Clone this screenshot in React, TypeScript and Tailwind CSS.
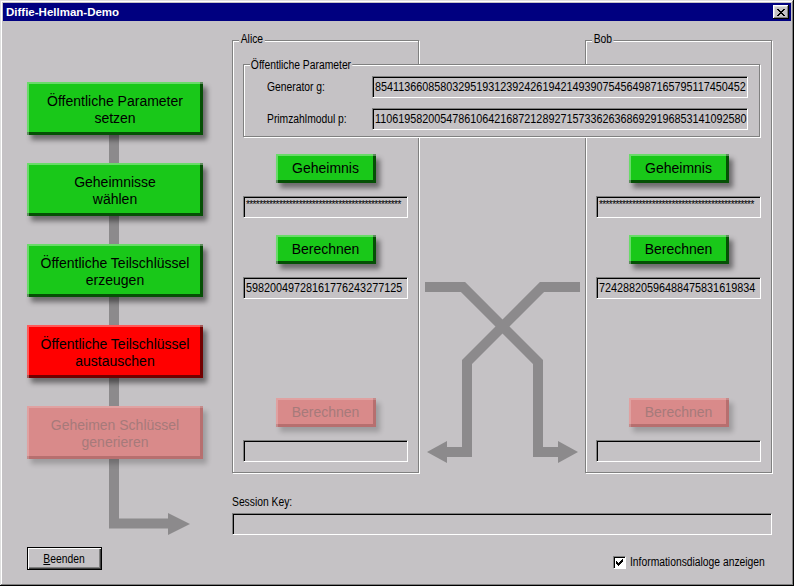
import React from "react";

type Variant = "green" | "red" | "off";

const variantClass: Record<Variant, string> = {
    green: "bg-[#19c819] text-black shadow-[inset_2px_2px_0_rgba(255,255,255,0.35),inset_-3px_-3px_0_rgba(0,50,0,0.8),4px_5px_5px_rgba(0,0,0,0.45)]",
    red: "bg-[#ff0000] text-black shadow-[inset_2px_2px_0_rgba(255,255,255,0.35),inset_-3px_-3px_0_rgba(80,0,0,0.8),4px_5px_5px_rgba(0,0,0,0.45)]",
    off: "bg-[#d98a8a] text-[#a67a7a] shadow-[inset_2px_2px_0_rgba(255,255,255,0.2),inset_-3px_-3px_0_rgba(120,60,60,0.35),4px_5px_5px_rgba(0,0,0,0.2)]",
};

// schmale Systemschrift nachahmen
function Txt({ children, className = "" }: { children: React.ReactNode; className?: string }) {
    return (
        <span className={`inline-block shrink-0 origin-left scale-x-[0.86] text-[12px] leading-[14px] whitespace-nowrap ${className}`}>
            {children}
        </span>
    );
}

function FlowButton({ lines, variant }: { lines: [string, string]; variant: Variant }) {
    return (
        <div className={`w-[176px] h-[53px] flex flex-col items-center justify-center pt-[2px] text-[14px] leading-[17px] ${variantClass[variant]}`}>
            <span>{lines[0]}</span>
            <span>{lines[1]}</span>
        </div>
    );
}

function SmallButton({ label, variant, className = "" }: { label: string; variant: Variant; className?: string }) {
    return (
        <div className={`w-[100px] h-[29px] shrink-0 flex items-center justify-center text-[14px] leading-[17px] ${variantClass[variant]} ${className}`}>
            {label}
        </div>
    );
}

function Field({ children, className = "" }: { children?: React.ReactNode; className?: string }) {
    return (
        <div className={`h-[22px] shrink-0 flex items-center px-[2px] bg-[#c5c2c5] border border-t-[#808080] border-l-[#808080] border-b-white border-r-white shadow-[inset_1px_1px_0_#000] overflow-hidden whitespace-nowrap ${className}`}>
            {children}
        </div>
    );
}

function Digits({ value }: { value: string }) {
    return <span className="inline-block shrink-0 origin-left scale-x-[0.9] text-[12px] leading-[14px]">{value}</span>;
}

const STARS = "***********************************************";

function PartyBox({ name, result }: { name: string; result: string }) {
    return (
        <div className="relative w-[187px] h-[433px] border border-[#808080] shadow-[inset_1px_1px_0_#fff,1px_1px_0_#fff] flex flex-col items-center pt-[113px]">
            <Txt className="absolute -top-[9px] left-[6px] px-[2px] bg-[#c5c2c5]">{name}</Txt>
            <SmallButton label="Geheimnis" variant="green" />
            <Field className="mt-[13px] w-[165px] !items-start pt-[2px]">
                <span className="text-[10px] leading-[12px] tracking-[-0.6px]">{STARS}</span>
            </Field>
            <SmallButton label="Berechnen" variant="green" className="mt-[17px]" />
            <Field className="mt-[13px] w-[165px]"><Digits value={result} /></Field>
            <SmallButton label="Berechnen" variant="off" className="mt-[99px]" />
            <Field className="mt-[13px] w-[165px]" />
        </div>
    );
}

export default function App() {
    return (
        <div className="w-[794px] h-[586px] bg-[#c5c2c5] p-[3px] shadow-[inset_-1px_-1px_0_#000,inset_1px_1px_0_#dfdfdf,inset_-2px_-2px_0_#808080,inset_2px_2px_0_#fff] flex flex-col font-['Liberation_Sans',Arial,sans-serif] text-black">
            {/* Titelleiste */}
            <div className="h-[18px] bg-[#000080] flex items-center justify-between pl-[3px] pr-[2px]">
                <span className="text-white font-bold text-[11.5px] leading-[14px]">Diffie-Hellman-Demo</span>
                <div className="w-[16px] h-[14px] bg-[#c5c2c5] flex items-center justify-center shadow-[inset_-1px_-1px_0_#000,inset_1px_1px_0_#fff,inset_-2px_-2px_0_#808080,inset_2px_2px_0_#dfdfdf]">
                    <svg width="8" height="7" viewBox="0 0 8 7" shapeRendering="crispEdges">
                        <path d="M0 0h2v1h-2zM6 0h2v1h-2zM1 1h2v1h-2zM5 1h2v1h-2zM2 2h4v1h-4zM3 3h2v1h-2zM2 4h4v1h-4zM1 5h2v1h-2zM5 5h2v1h-2zM0 6h2v1h-2zM6 6h2v1h-2z" fill="#000" />
                    </svg>
                </div>
            </div>

            <div className="flex">
                {/* Ablauf links */}
                <div className="relative ml-[24px] w-[205px] h-[514px]">
                    <svg className="absolute inset-0" width="205" height="514" viewBox="27 21 205 514">
                        <polyline points="114,100 114,523.5 170,523.5" fill="none" stroke="#8c8a8c" strokeWidth="10" strokeLinejoin="miter" />
                        <polygon points="168,513 190,524 168,535" fill="#8c8a8c" />
                    </svg>
                    <div className="relative flex flex-col gap-[28px] pt-[61px]">
                        <FlowButton lines={["Öffentliche Parameter", "setzen"]} variant="green" />
                        <FlowButton lines={["Geheimnisse", "wählen"]} variant="green" />
                        <FlowButton lines={["Öffentliche Teilschlüssel", "erzeugen"]} variant="green" />
                        <FlowButton lines={["Öffentliche Teilschlüssel", "austauschen"]} variant="red" />
                        <FlowButton lines={["Geheimen Schlüssel", "generieren"]} variant="off" />
                    </div>
                </div>

                {/* Alice / Bob */}
                <div className="w-[540px] pt-[19px]">
                    <div className="relative flex">
                        <PartyBox name="Alice" result="59820049728161776243277125" />
                        <div className="w-[166px] h-[433px]">
                            <svg width="166" height="433" viewBox="419 40 166 433">
                                <polyline points="425,287 463,287 538,362 538,452 560,452" fill="none" stroke="#8c8a8c" strokeWidth="10" strokeLinejoin="miter" />
                                <polygon points="558,441 578,452 558,463" fill="#8c8a8c" />
                                <polyline points="580,287 542,287 467,362 467,452 445,452" fill="none" stroke="#8c8a8c" strokeWidth="10" strokeLinejoin="miter" />
                                <polygon points="447,441 427,452 447,463" fill="#8c8a8c" />
                            </svg>
                        </div>
                        <PartyBox name="Bob" result="72428820596488475831619834" />

                        {/* Öffentliche Parameter liegt über beiden Rahmen */}
                        <div className="absolute left-[11px] top-[24px] w-[517px] h-[73px] bg-[#c5c2c5] border border-[#808080] shadow-[inset_1px_1px_0_#fff,1px_1px_0_#fff] pl-[23px] pt-[11px] flex flex-col gap-[10px]">
                            <Txt className="absolute -top-[7px] left-[6px] px-[1px] bg-[#c5c2c5]">Öffentliche Parameter</Txt>
                            <div className="flex items-center">
                                <div className="w-[105px] flex items-center"><Txt>Generator g:</Txt></div>
                                <Field className="w-[376px]"><Digits value="85411366085803295193123924261942149390754564987165795117450452" /></Field>
                            </div>
                            <div className="flex items-center">
                                <div className="w-[105px] flex items-center"><Txt>Primzahlmodul p:</Txt></div>
                                <Field className="w-[376px]"><Digits value="11061958200547861064216872128927157336263686929196853141092580" /></Field>
                            </div>
                        </div>
                    </div>

                    <div className="mt-[22px] h-[14px] flex"><Txt>Session Key:</Txt></div>
                    <Field className="mt-[4px] w-[540px]" />
                </div>
            </div>

            {/* Fußzeile */}
            <div className="flex items-start mt-[12px]">
                <div className="ml-[24px] w-[75px] h-[23px] flex items-center justify-center border border-black shadow-[inset_1px_1px_0_#fff,inset_-1px_-1px_0_#404040,inset_-2px_-2px_0_#808080]">
                    <span className="inline-block scale-x-[0.86] text-[12px] leading-[14px]"><span className="underline">B</span>eenden</span>
                </div>
                <div className="ml-[511px] mt-[8px] flex items-center gap-[4px]">
                    <div className="w-[13px] h-[13px] bg-white border border-t-[#808080] border-l-[#808080] border-b-white border-r-white shadow-[inset_1px_1px_0_#000] flex items-center justify-center">
                        <svg width="9" height="9" viewBox="0 0 9 9" shapeRendering="crispEdges">
                            <path d="M7 1h1v3h-1zM6 2h1v3h-1zM5 3h1v3h-1zM4 4h1v3h-1zM3 5h1v3h-1zM2 4h1v3h-1zM1 3h1v3h-1z" fill="#000" />
                        </svg>
                    </div>
                    <Txt>Informationsdialoge anzeigen</Txt>
                </div>
            </div>
        </div>
    );
}
